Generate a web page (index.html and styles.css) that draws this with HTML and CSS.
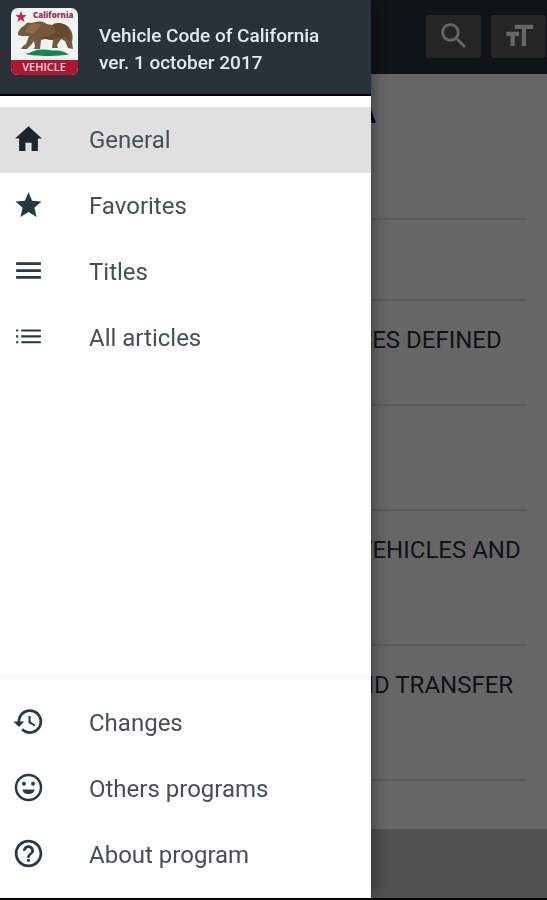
FILE: index.html
```
<!DOCTYPE html>
<html lang="en">
<head>
    <meta charset="UTF-8">
    <meta name="viewport" content="width=device-width, initial-scale=1.0">
    <title>Vehicle Code of California</title>
    <link rel="stylesheet" href="styles.css">
</head>
<body>
    <div class="page">
        <header class="toolbar">
            <button class="tool-button" type="button" aria-label="Search">
                <svg viewBox="0 0 24 24"><path d="M15.5 14h-.79l-.28-.27C15.41 12.59 16 11.11 16 9.5 16 5.91 13.09 3 9.5 3S3 5.91 3 9.5 5.91 16 9.5 16c1.61 0 3.09-.59 4.23-1.57l.27.28v.79l5 4.99L20.49 19l-4.99-5zm-6 0C7.01 14 5 11.99 5 9.5S7.01 5 9.5 5 14 7.01 14 9.5 11.99 14 9.5 14z"/></svg>
            </button>
            <button class="tool-button" type="button" aria-label="Text size">
                <svg viewBox="0 0 24 24"><path d="M9 4v3h5v12h3V7h5V4H9zm-6 8h3v7h3v-7h3V9H3v3z"/></svg>
            </button>
        </header>
        <main class="content">
            <h1 class="title">VEHICLE CODE OF CALIFORNIA</h1>
            <ul class="divisions">
                <li>GENERAL PROVISIONS</li>
                <li>DIVISION 1. WORDS AND PHRASES DEFINED [100 - 681]</li>
                <li>DIVISION 2. ADMINISTRATION<br>[1500 - 3093]</li>
                <li>DIVISION 3. REGISTRATION OF VEHICLES AND CERTIFICATES OF TITLE<br>[4000 - 9808]</li>
                <li>DIVISION 3.5. REGISTRATION AND TRANSFER OF VESSELS<br>[9840 - 9928]</li>
            </ul>
        </main>
    </div>

    <div class="overlay"></div>

    <aside class="drawer">
        <div class="drawer-header">
            <svg class="logo" viewBox="0 0 67 67" role="img" aria-label="California Vehicle">
                <defs>
                    <clipPath id="logoShape"><rect width="67" height="67" rx="7"/></clipPath>
                </defs>
                <g clip-path="url(#logoShape)">
                    <rect width="67" height="67" fill="#eef3f3"/>
                    <rect y="52" width="67" height="15" fill="#b3142f"/>
                    <path fill="#cf1f40" d="M10 3l1.4 4.1 4.3.1-3.400 2.600 1.200 4.200L10 11.600 6.500 14l1.200-4.200-3.400-2.600 4.300-.1z"/>
                    <text class="logo-name" x="22" y="10">California</text>
                    <path fill="#14864a" d="M14 46c6-1 8-4 17-4.500 6-.5 9 1.500 14 1 6 0 9 2 13 4-10 2-34 2-44-.5z"/>
                    <path fill="#75593a" d="M7 25c1-4 4-6 7-8 2-3 4-3 6-2 5-1 8-2 12-1 4 2 7 4 12 2 6-2 12 0 15 5 3 4 3 9 2 13l1 7-5-1-3-7-4-2-4 6 1 3h-6l1-8-8-1-4 1-1 9h-6l1-3-1-5-3 4-4 4h-6l2-3 3-2 3-8-7 0-4-1z"/>
                    <path fill="#654a2e" d="M42 16c6-2 13-1 16 6 2 4 1 9 1 12l-4-5-8 1-8 2-10-3c7 0 12-2 16-5z"/>
                    <path fill="#8a6c4a" d="M18 17c5-2 9-2 12 0l-7 9-9-2z"/>
                    <text class="logo-label" x="33" y="63">VEHICLE</text>
                </g>
            </svg>
            <p class="app-name">Vehicle Code of California<br>ver. 1 october 2017</p>
        </div>
        <nav class="menu menu-main">
            <a class="menu-item active" href="#general">
                <svg viewBox="0 0 512 512"><path d="M208 448V320h96v128h97.600V256H464L256 64 48 256h62.400v192z"/></svg>
                General
            </a>
            <a class="menu-item" href="#favorites">
                <svg viewBox="0 0 512 512"><path d="M256 372.686L380.830 448l-33.021-142.066L458 210.409l-145.267-12.475L256 64l-56.743 133.934L54 210.409l110.192 95.525L131.161 448z"/></svg>
                Favorites
            </a>
            <a class="menu-item" href="#titles">
                <svg viewBox="0 0 512 512"><path d="M64 384h384v-42.666H64V384zm0-106.666h384v-42.667H64v42.667zM64 128v42.665h384V128H64z"/></svg>
                Titles
            </a>
            <a class="menu-item" href="#articles">
                <svg viewBox="0 0 512 512"><path d="M144 146h304v34H144zM144 237h304v34H144zM144 328h304v34H144zM64 146h34v34H64zM64 237h34v34H64zM64 328h34v34H64z"/></svg>
                All articles
            </a>
        </nav>
        <nav class="menu menu-bottom">
            <a class="menu-item" href="#changes">
                <svg viewBox="0 0 24 24"><path d="M13 3c-4.970 0-9 4.030-9 9H1l3.890 3.890.07.14L9 12H6c0-3.870 3.130-7 7-7s7 3.130 7 7-3.130 7-7 7c-1.930 0-3.680-.79-4.940-2.060l-1.420 1.420C8.270 19.990 10.510 21 13 21c4.970 0 9-4.030 9-9s-4.030-9-9-9zm-1 5v5l4.280 2.540.72-1.210-3.500-2.080V8H12z"/></svg>
                Changes
            </a>
            <a class="menu-item" href="#others">
                <svg viewBox="0 0 24 24"><path d="M12 2a10 10 0 1 0 0 20 10 10 0 0 0 0-20zm0 18.200a8.200 8.200 0 1 1 0-16.400 8.200 8.200 0 0 1 0 16.400z"/><circle cx="8.700" cy="9.300" r="1.400"/><circle cx="15.300" cy="9.300" r="1.400"/><path d="M7.600 13.500h8.800c-.4 2.400-2.200 3.300-4.400 3.300s-4-.9-4.400-3.300z"/></svg>
                Others programs
            </a>
            <a class="menu-item" href="#about">
                <svg viewBox="0 0 24 24"><path d="M11 18h2v-2h-2v2zm1-16C6.480 2 2 6.480 2 12s4.480 10 10 10 10-4.480 10-10S17.520 2 12 2zm0 18c-4.410 0-8-3.590-8-8s3.590-8 8-8 8 3.590 8 8-3.590 8-8 8zm0-14c-2.210 0-4 1.790-4 4h2c0-1.100.9-2 2-2s2 .9 2 2c0 2-3 1.750-3 5h2c0-2.250 3-2.500 3-5 0-2.210-1.790-4-4-4z"/></svg>
                About program
            </a>
        </nav>
    </aside>
</body>
</html>
```
FILE: styles.css
```
* {
    box-sizing: border-box;
}
body {
    margin: 0;
    font-family: Roboto, Arial, sans-serif;
    background-color: #c8c8c8;
    color: #263238;
}
.page {
    min-height: 100vh;
    border-bottom: 2px solid #000;
}
.toolbar {
    display: flex;
    justify-content: flex-end;
    align-items: center;
    gap: 10px;
    height: 74px;
    padding: 0 1px 2px;
    background-color: #263238;
}
.tool-button {
    display: flex;
    justify-content: center;
    align-items: center;
    width: 55px;
    height: 43px;
    padding: 0;
    border: none;
    border-radius: 3px;
    background-color: #5c5c5c;
    cursor: pointer;
}
.tool-button svg {
    width: 34px;
    height: 34px;
    fill: #fff;
}
.content {
    padding: 26px 20px 48px;
    background-color: #fff;
}
.title {
    min-height: 118px;
    margin: 0;
    font-size: 25px;
    line-height: 30px;
    font-weight: 700;
    color: #000;
}
.divisions {
    margin: 0;
    padding: 0;
    list-style: none;
    border-bottom: 2px solid #e2e2e2;
}
.divisions li {
    min-height: 81px;
    padding: 24px 0 19px 2px;
    border-top: 2px solid #e2e2e2;
    font-size: 24px;
    line-height: 30px;
}

/* Side menu */
.overlay {
    position: fixed;
    inset: 0 0 2px;
    background-color: rgba(0, 0, 0, 0.6);
}
.drawer {
    position: fixed;
    top: 0;
    bottom: 2px;
    left: 0;
    display: flex;
    flex-direction: column;
    width: calc(100% - 176px);
    background-color: #fff;
    box-shadow: 0 0 16px rgba(0, 0, 0, 0.5);
    overflow-y: auto;
}
.drawer-header {
    display: flex;
    gap: 21px;
    height: 96px;
    padding: 8px 11px;
    background-color: #2a3239;
    border-bottom: 2px solid #000;
}
.logo {
    flex: none;
    width: 67px;
    height: 67px;
}
.logo-name {
    font-family: "Open Sans", sans-serif;
    font-size: 8px;
    font-weight: 800;
    fill: #a3304f;
}
.logo-label {
    font-family: "Open Sans", sans-serif;
    font-size: 11px;
    font-weight: 600;
    text-anchor: middle;
    fill: #f3dfe2;
}
.app-name {
    margin: 0;
    padding-top: 14px;
    font-size: 19px;
    line-height: 27px;
    font-weight: 500;
    color: #e4eaee;
}
.menu {
    display: flex;
    flex-direction: column;
}
.menu-main {
    flex: 1;
    padding-top: 11px;
}
.menu-bottom {
    padding: 11px 0 10px;
    border-top: 4px solid #f8f8f8;
}
.menu-item {
    display: flex;
    align-items: center;
    gap: 44px;
    height: 66px;
    padding: 0 12px;
    font-size: 24px;
    line-height: 30px;
    color: #455055;
    text-decoration: none;
}
.menu-item svg {
    width: 33px;
    height: 33px;
    margin-bottom: 3px;
    fill: #263a40;
}
.menu-item.active {
    background-color: #e0e0e0;
}
.menu-item.active svg {
    fill: #1c272c;
}
```
